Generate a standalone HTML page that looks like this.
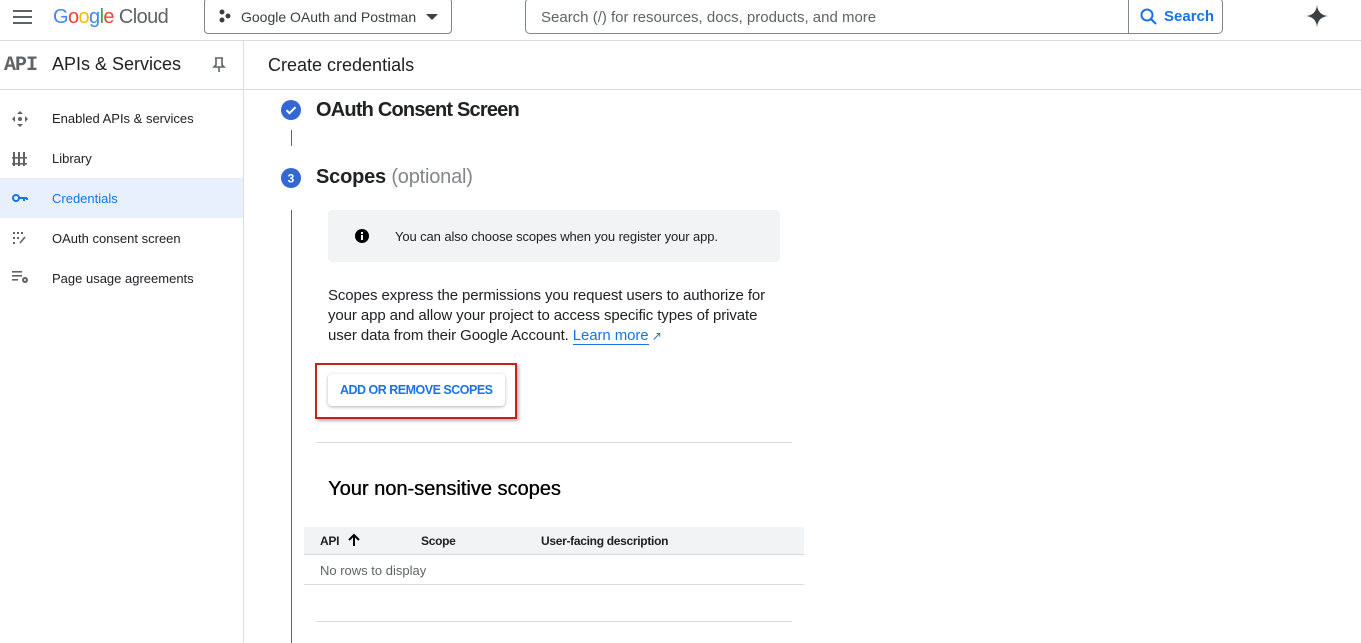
<!DOCTYPE html>
<html><head><meta charset="utf-8"><style>
*{box-sizing:border-box;margin:0;padding:0}
body{width:1361px;height:643px;overflow:hidden;background:#fff;font-family:"Liberation Sans",Roboto,sans-serif;color:#202124;position:relative}
.a{position:absolute}
.t{white-space:nowrap}
</style></head><body>
<div class="a" style="left:0;top:40px;width:1361px;height:1px;background:#dadce0"></div>
<div class="a" style="left:13px;top:10px;width:19px;height:2px;background:#5f6368;box-shadow:0 6px 0 #5f6368,0 12px 0 #5f6368"></div>
<div class="a t" style="left:53px;top:6px;font-size:20px;letter-spacing:-0.6px"><span style="color:#4285f4">G</span><span style="color:#ea4335">o</span><span style="color:#fbbc04">o</span><span style="color:#4285f4">g</span><span style="color:#34a853">l</span><span style="color:#ea4335">e</span> <span style="color:#5f6368">Cloud</span></div>
<div class="a" style="left:204px;top:-2px;width:248px;height:36px;border:1px solid #80868b;border-radius:4px"></div>
<svg class="a" style="left:218px;top:9px" width="14" height="14"><circle cx="4" cy="3" r="2.5" fill="#3c4043"/><circle cx="10" cy="7" r="2.5" fill="#3c4043"/><circle cx="4" cy="11" r="2.5" fill="#3c4043"/></svg>
<div class="a t" style="left:241px;top:9px;font-size:14px;color:#3c4043">Google OAuth and Postman</div>
<div class="a" style="left:426px;top:14px;width:0;height:0;border-left:6px solid transparent;border-right:6px solid transparent;border-top:6px solid #3c4043"></div>
<div class="a" style="left:525px;top:-2px;width:698px;height:36px;border:1px solid #80868b;border-radius:5px"></div>
<div class="a" style="left:1128px;top:0;width:1px;height:34px;background:#80868b"></div>
<div class="a t" style="left:541px;top:9px;font-size:15px;color:#5f6368">Search (/) for resources, docs, products, and more</div>
<svg class="a" style="left:1139px;top:7px" width="20" height="20"><circle cx="8" cy="8" r="5.5" fill="none" stroke="#1a73e8" stroke-width="2"/><path d="M12 12l5 5" stroke="#1a73e8" stroke-width="2.2"/></svg>
<div class="a t" style="left:1164px;top:8px;font-size:15px;color:#1a73e8;font-weight:bold">Search</div>
<svg class="a" style="left:1306px;top:5px" width="22" height="22"><path d="M11 0Q12 10 22 11Q12 12 11 22Q10 12 0 11Q10 10 11 0Z" fill="#3c4043"/></svg>
<div class="a" style="left:243px;top:41px;width:1px;height:602px;background:#dadce0"></div>
<div class="a" style="left:0;top:89px;width:1361px;height:1px;background:#dadce0"></div>
<div class="a t" style="left:4px;top:54px;font-family:'Liberation Mono',monospace;font-size:20px;font-weight:bold;color:#5f6368;letter-spacing:-1px">API</div>
<div class="a t" style="left:52px;top:54px;font-size:18px">APIs &amp; Services</div>
<svg class="a" style="left:212px;top:57px" width="14" height="16"><path d="M3 1h8M4 1v7l-2 2h10l-2-2V1M7 10v5" fill="none" stroke="#5f6368" stroke-width="1.6"/></svg>
<div class="a t" style="left:268px;top:55px;font-size:18px">Create credentials</div>
<div class="a" style="left:0;top:178px;width:243px;height:40px;background:#e8f0fe"></div>
<svg class="a" style="left:11px;top:110px" width="18" height="18"><g fill="#5f6368"><path d="M9 1l3 3H6zM9 17l-3-3h6zM1 9l3-3v6zM17 9l-3 3V6z"/><circle cx="9" cy="9" r="2"/></g></svg>
<svg class="a" style="left:12px;top:151px" width="16" height="16"><g fill="#5f6368"><rect x="1" y="1" width="2" height="14"/><rect x="6" y="1" width="2" height="14"/><rect x="11" y="1" width="2" height="14"/><rect x="0" y="6" width="15" height="1.6"/><rect x="0" y="12" width="15" height="1.6"/></g></svg>
<svg class="a" style="left:12px;top:193px" width="16" height="10"><circle cx="4" cy="5" r="3" fill="none" stroke="#1a73e8" stroke-width="2"/><path d="M7 5h8M12 5v3M15 5v2" stroke="#1a73e8" stroke-width="2"/></svg>
<svg class="a" style="left:13px;top:232px" width="14" height="14"><g fill="#5f6368"><rect x="0" y="0" width="2" height="2"/><rect x="4" y="0" width="2" height="2"/><rect x="8" y="0" width="2" height="2"/><rect x="0" y="5" width="2" height="2"/><rect x="4" y="5" width="2" height="2"/><rect x="0" y="10" width="2" height="2"/><path d="M7 11l5-6" stroke="#5f6368" stroke-width="1.6"/></g></svg>
<svg class="a" style="left:12px;top:271px" width="18" height="14"><g fill="#5f6368"><rect x="0" y="0" width="10" height="1.6"/><rect x="0" y="4" width="10" height="1.6"/><rect x="0" y="8" width="6" height="1.6"/><circle cx="13" cy="9" r="3"/></g><circle cx="13" cy="9" r="1" fill="#fff"/></svg>
<div class="a t" style="left:52px;top:111px;font-size:13px">Enabled APIs &amp; services</div>
<div class="a t" style="left:52px;top:151px;font-size:13px">Library</div>
<div class="a t" style="left:52px;top:191px;font-size:13px;color:#1a73e8">Credentials</div>
<div class="a t" style="left:52px;top:231px;font-size:13px">OAuth consent screen</div>
<div class="a t" style="left:52px;top:271px;font-size:13px">Page usage agreements</div>
<svg class="a" style="left:281px;top:100px" width="20" height="20"><circle cx="10" cy="10" r="10" fill="#3367d6"/><path d="M5.5 10.2l3 3 6-6" fill="none" stroke="#fff" stroke-width="2"/></svg>
<div class="a t" style="left:316px;top:99px;font-size:20px;font-weight:bold;color:#202124;letter-spacing:-0.8px">OAuth Consent Screen</div>
<div class="a" style="left:291px;top:130px;width:1px;height:16px;background:#5f6368"></div>
<svg class="a" style="left:281px;top:168px" width="20" height="20"><circle cx="10" cy="10" r="10" fill="#3367d6"/><text x="10" y="14.5" text-anchor="middle" font-size="12" font-weight="bold" fill="#fff" font-family="Liberation Sans">3</text></svg>
<div class="a t" style="left:316px;top:166px;font-size:20px;color:#202124;letter-spacing:-0.2px"><b style="font-weight:bold">Scopes</b> <span style="color:#80868b">(optional)</span></div>
<div class="a" style="left:291px;top:210px;width:1px;height:433px;background:#5f6368"></div>
<div class="a" style="left:328px;top:210px;width:452px;height:52px;background:#f1f3f4;border-radius:4px"></div>
<svg class="a" style="left:355px;top:229px" width="14" height="14"><circle cx="7" cy="7" r="7" fill="#000"/><rect x="6" y="6" width="2" height="5" fill="#fff"/><rect x="6" y="3" width="2" height="2" fill="#fff"/></svg>
<div class="a t" style="left:395px;top:229px;font-size:13px;letter-spacing:-0.1px">You can also choose scopes when you register your app.</div>
<div class="a" style="left:328px;top:286px;width:460px;font-size:15px;line-height:20px;letter-spacing:-0.1px">Scopes express the permissions you request users to authorize for your app and allow your project to access specific types of private user data from their Google Account. <span style="color:#1a73e8;border-bottom:1px solid #1a73e8">Learn more</span><span style="color:#1a73e8;font-size:12px"> ↗</span></div>
<div class="a" style="left:315px;top:363px;width:202px;height:56px;border:2px solid #c5221f;box-shadow:2px 2px 3px rgba(0,0,0,.3)"></div>
<div class="a" style="left:328px;top:374px;width:177px;height:32px;background:#fff;border-radius:4px;box-shadow:0 1px 3px rgba(0,0,0,.3)"></div>
<div class="a t" style="left:340px;top:383px;font-size:12.5px;font-weight:bold;color:#1a73e8;letter-spacing:-0.5px">ADD OR REMOVE SCOPES</div>
<div class="a" style="left:316px;top:442px;width:476px;height:1px;background:#dadce0"></div>
<div class="a t" style="left:328px;top:478px;font-size:20px;color:#000;text-shadow:0.4px 0 0 #000">Your non-sensitive scopes</div>
<div class="a" style="left:304px;top:527px;width:500px;height:28px;background:#f1f3f4;border-bottom:1px solid #dadce0"></div>
<div class="a t" style="left:320px;top:534px;font-size:12px;font-weight:bold;letter-spacing:-0.3px">API</div>
<svg class="a" style="left:347px;top:533px" width="14" height="14"><path d="M7 13V2M2 7l5-5 5 5" fill="none" stroke="#000" stroke-width="2"/></svg>
<div class="a t" style="left:421px;top:534px;font-size:12px;font-weight:bold;letter-spacing:-0.3px">Scope</div>
<div class="a t" style="left:541px;top:534px;font-size:12px;font-weight:bold;letter-spacing:-0.3px">User-facing description</div>
<div class="a t" style="left:320px;top:563px;font-size:13px;color:#5f6368">No rows to display</div>
<div class="a" style="left:304px;top:584px;width:500px;height:1px;background:#dadce0"></div>
<div class="a" style="left:316px;top:621px;width:476px;height:1px;background:#dadce0"></div>
</body></html>
